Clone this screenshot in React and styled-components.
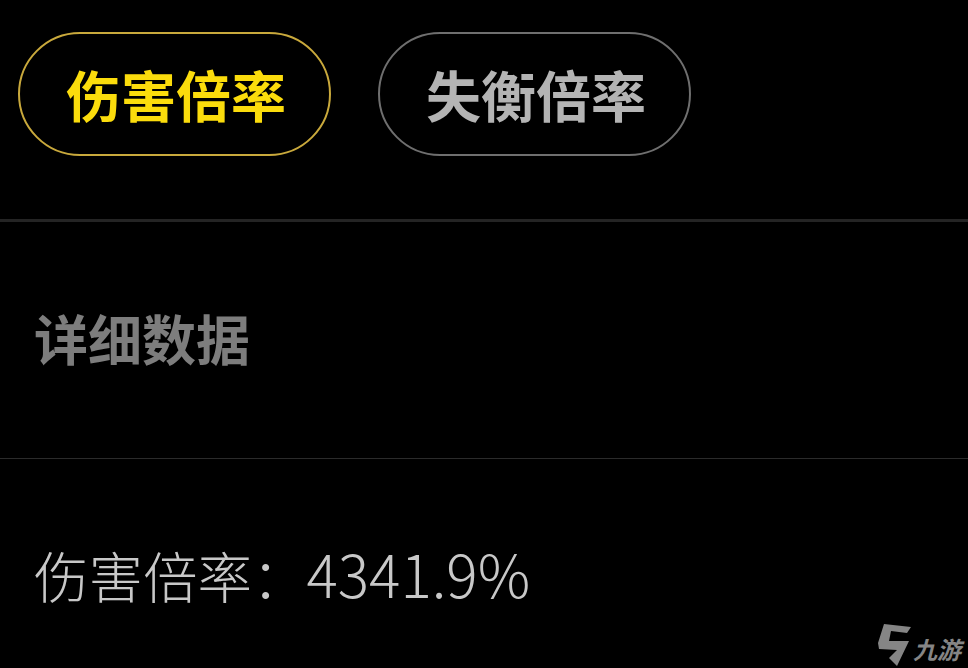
import React from 'react'
import styled, { createGlobalStyle } from 'styled-components'

const GlobalStyle = createGlobalStyle`
    html, body {
        margin: 0;
        padding: 0;
        background: #000;
    }
    body {
        font-family: "Noto Sans CJK SC", "Liberation Sans", sans-serif;
    }
`;

const Page = styled.div`
    position: relative;
    width: 968px;
    height: 668px;
    overflow: hidden;
    background: #000;
`;

const Tabs = styled.div`
    display: flex;
    gap: 47px;
    height: 222px;
    box-sizing: border-box;
    padding: 32px 0 0 18px;
    border-bottom: 3px solid #242424;
`;

const Tab = styled.div`
    display: flex;
    align-items: center;
    justify-content: center;
    box-sizing: border-box;
    width: 313px;
    height: 124px;
    padding: 0 0 2px 3px;
    border-radius: 62px;
    border: 2px solid ${props => props.$active ? '#c9a93c' : '#6f6f6f'};
    color: ${props => props.$active ? '#fbdc0c' : '#b4b4b4'};
    font-size: 55px;
    font-weight: 700;
    line-height: 1;
`;

const Section = styled.div`
    display: flex;
    align-items: center;
    height: 237px;
    box-sizing: border-box;
    padding: 0 0 4px 34px;
    border-bottom: 1px solid #2b2b2b;
    color: #7d7d7d;
    font-size: 54px;
    font-weight: 700;
    line-height: 1;
`;

const Detail = styled.div`
    padding: 87px 0 0 34px;
    color: #c8c8c8;
    font-size: 54.5px;
    font-weight: 300;
    line-height: 54px;
    white-space: nowrap;
`;

const DetailValue = styled.span`
    font-size: 58.5px;
`;

const Watermark = styled.div`
    position: absolute;
    left: 878px;
    top: 623px;
    display: flex;
    align-items: flex-start;
    gap: 1px;
    color: #858585;
`;

const WatermarkText = styled.span`
    font-size: 24px;
    font-weight: 700;
    font-style: italic;
    line-height: 26px;
    margin-top: 13px;
`;

function LogoMark() {
    return (
        <svg width="34" height="44" viewBox="0 0 34 44">
            <path
                fill="#858585"
                d="M6 1 L33 4 L29 10 L13 8 L11 18 L31 18 L19 43 L11 35 L19 27 L1 26 L0 20 Z"
            />
        </svg>
    )
}

function App() {
    return (
        <Page>
            <GlobalStyle />
            <Tabs>
                <Tab $active>伤害倍率</Tab>
                <Tab>失衡倍率</Tab>
            </Tabs>
            <Section>详细数据</Section>
            <Detail>伤害倍率：<DetailValue>4341.9%</DetailValue></Detail>
            <Watermark>
                <LogoMark />
                <WatermarkText>九游</WatermarkText>
            </Watermark>
        </Page>
    )
}

export default App
